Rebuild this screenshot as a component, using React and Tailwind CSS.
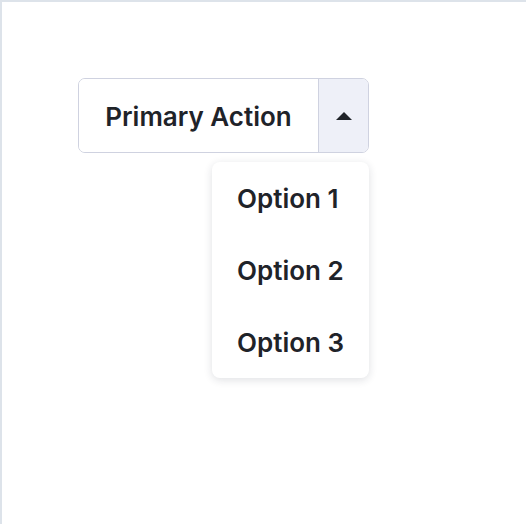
import React from 'react';

function Caret() {
  return (
    <svg width="16" height="8" viewBox="0 0 16 8" className="block">
      <path d="M0 8 L8 0 L16 8 Z" fill="#1f2329" />
    </svg>
  );
}

export default function App() {
  const options = ['Option 1', 'Option 2', 'Option 3'];

  return (
    <div
      className="min-h-screen bg-white border-t-2 border-l-2 border-[#dde3ea] pt-[76px] pl-[76px] text-[#1f2329]"
      style={{ fontFamily: 'Inter, "Noto Sans", sans-serif' }}
    >
      <div className="relative inline-block">
        <div className="flex h-[75px] rounded-[7px] border border-[#cfd2e0] overflow-hidden">
          <button className="w-[239px] bg-white text-[26px] font-semibold pt-[2px] flex items-center justify-center">
            Primary Action
          </button>
          <button className="w-[50px] bg-[#eef0f8] border-l border-[#cfd2e0] pt-[1px] flex items-center justify-center">
            <Caret />
          </button>
        </div>

        {/* menu */}
        <div className="absolute right-0 top-full mt-[9px] w-[157px] bg-white rounded-[8px] shadow-[0_2px_8px_rgba(30,35,60,0.14)]">
          {options.map((o) => (
            <div key={o} className="h-[72px] flex items-center pl-[25px] pt-[1px] text-[26px] font-semibold">
              {o}
            </div>
          ))}
        </div>
      </div>
    </div>
  );
}
